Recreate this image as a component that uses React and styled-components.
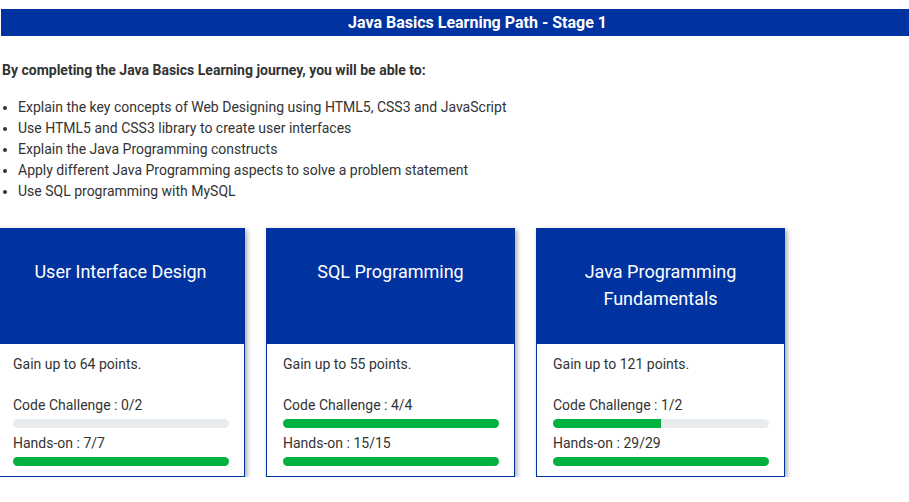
import React from "react";
import styled, { createGlobalStyle } from "styled-components";

const GlobalStyle = createGlobalStyle`
  body {
    margin: 0;
    font-family: Roboto, "Liberation Sans", sans-serif;
    color: #333;
    background: #fff;
  }
`;

const outcomes = [
  "Explain the key concepts of Web Designing using HTML5, CSS3 and JavaScript",
  "Use HTML5 and CSS3 library to create user interfaces",
  "Explain the Java Programming constructs",
  "Apply different Java Programming aspects to solve a problem statement",
  "Use SQL programming with MySQL",
];

const courses = [
  {
    title: "User Interface Design",
    points: 64,
    code: [0, 2],
    hands: [7, 7],
  },
  {
    title: "SQL Programming",
    points: 55,
    code: [4, 4],
    hands: [15, 15],
  },
  {
    title: "Java Programming Fundamentals",
    points: 121,
    code: [1, 2],
    hands: [29, 29],
  },
];

const Progress = ({ label, value }) => {
  const pct = value[1] ? (value[0] / value[1]) * 100 : 0;
  return (
    <>
      <Label>
        {label} : {value[0]}/{value[1]}
      </Label>
      <Track>
        <Fill style={{ width: `${pct}%` }} />
      </Track>
    </>
  );
};

const App = () => {
  return (
    <Page>
      <GlobalStyle />
      <Banner>Java Basics Learning Path - Stage 1</Banner>
      <Intro>By completing the Java Basics Learning journey, you will be able to:</Intro>
      <List>
        {outcomes.map((o) => (
          <li key={o}>{o}</li>
        ))}
      </List>
      <Cards>
        {courses.map((c) => (
          <Card key={c.title}>
            <CardHead>{c.title}</CardHead>
            <CardBody>
              <Points>Gain up to {c.points} points.</Points>
              <Progress label="Code Challenge" value={c.code} />
              <Progress label="Hands-on" value={c.hands} />
            </CardBody>
          </Card>
        ))}
      </Cards>
    </Page>
  );
};

export default App;

const Page = styled.div`
  padding: 9px 0 0 2px;
`;

const Banner = styled.div`
  height: 27px;
  margin-left: -1px;
  padding-left: 45px;
  background: #0033a0;
  color: #fff;
  font-size: 16px;
  font-weight: 700;
  line-height: 27px;
  text-align: center;
`;

const Intro = styled.p`
  margin: 24px 0 0;
  font-size: 14px;
  font-weight: 700;
  line-height: 21px;
`;

const List = styled.ul`
  margin: 16px 0 0;
  padding-left: 16px;
  font-size: 14px;
  line-height: 21px;
`;

const Cards = styled.div`
  display: flex;
  gap: 21px;
  margin: 26px 0 0 -6px;
`;

const Card = styled.div`
  width: 249px;
  box-shadow: 2px 2px 5px rgba(0, 0, 0, 0.35);
`;

const CardHead = styled.div`
  height: 116px;
  box-sizing: border-box;
  background: #0033a0;
  color: #fff;
  text-align: center;
  padding: 30px 20px 0;
  font-size: 18px;
  line-height: 27px;
`;

const CardBody = styled.div`
  border: 1px solid #0033a0;
  border-top: none;
  padding: 10px 15px 10px 16px;
  font-size: 14px;
  line-height: 21px;
`;

const Points = styled.div`
  margin-bottom: 20px;
`;

const Label = styled.div``;

const Track = styled.div`
  height: 9px;
  margin: 3px 0 5px;
  border-radius: 5px;
  background: #e9ecef;
  overflow: hidden;

  &:last-child {
    margin-bottom: 0;
  }
`;

const Fill = styled.div`
  height: 100%;
  background: #00b140;
`;
